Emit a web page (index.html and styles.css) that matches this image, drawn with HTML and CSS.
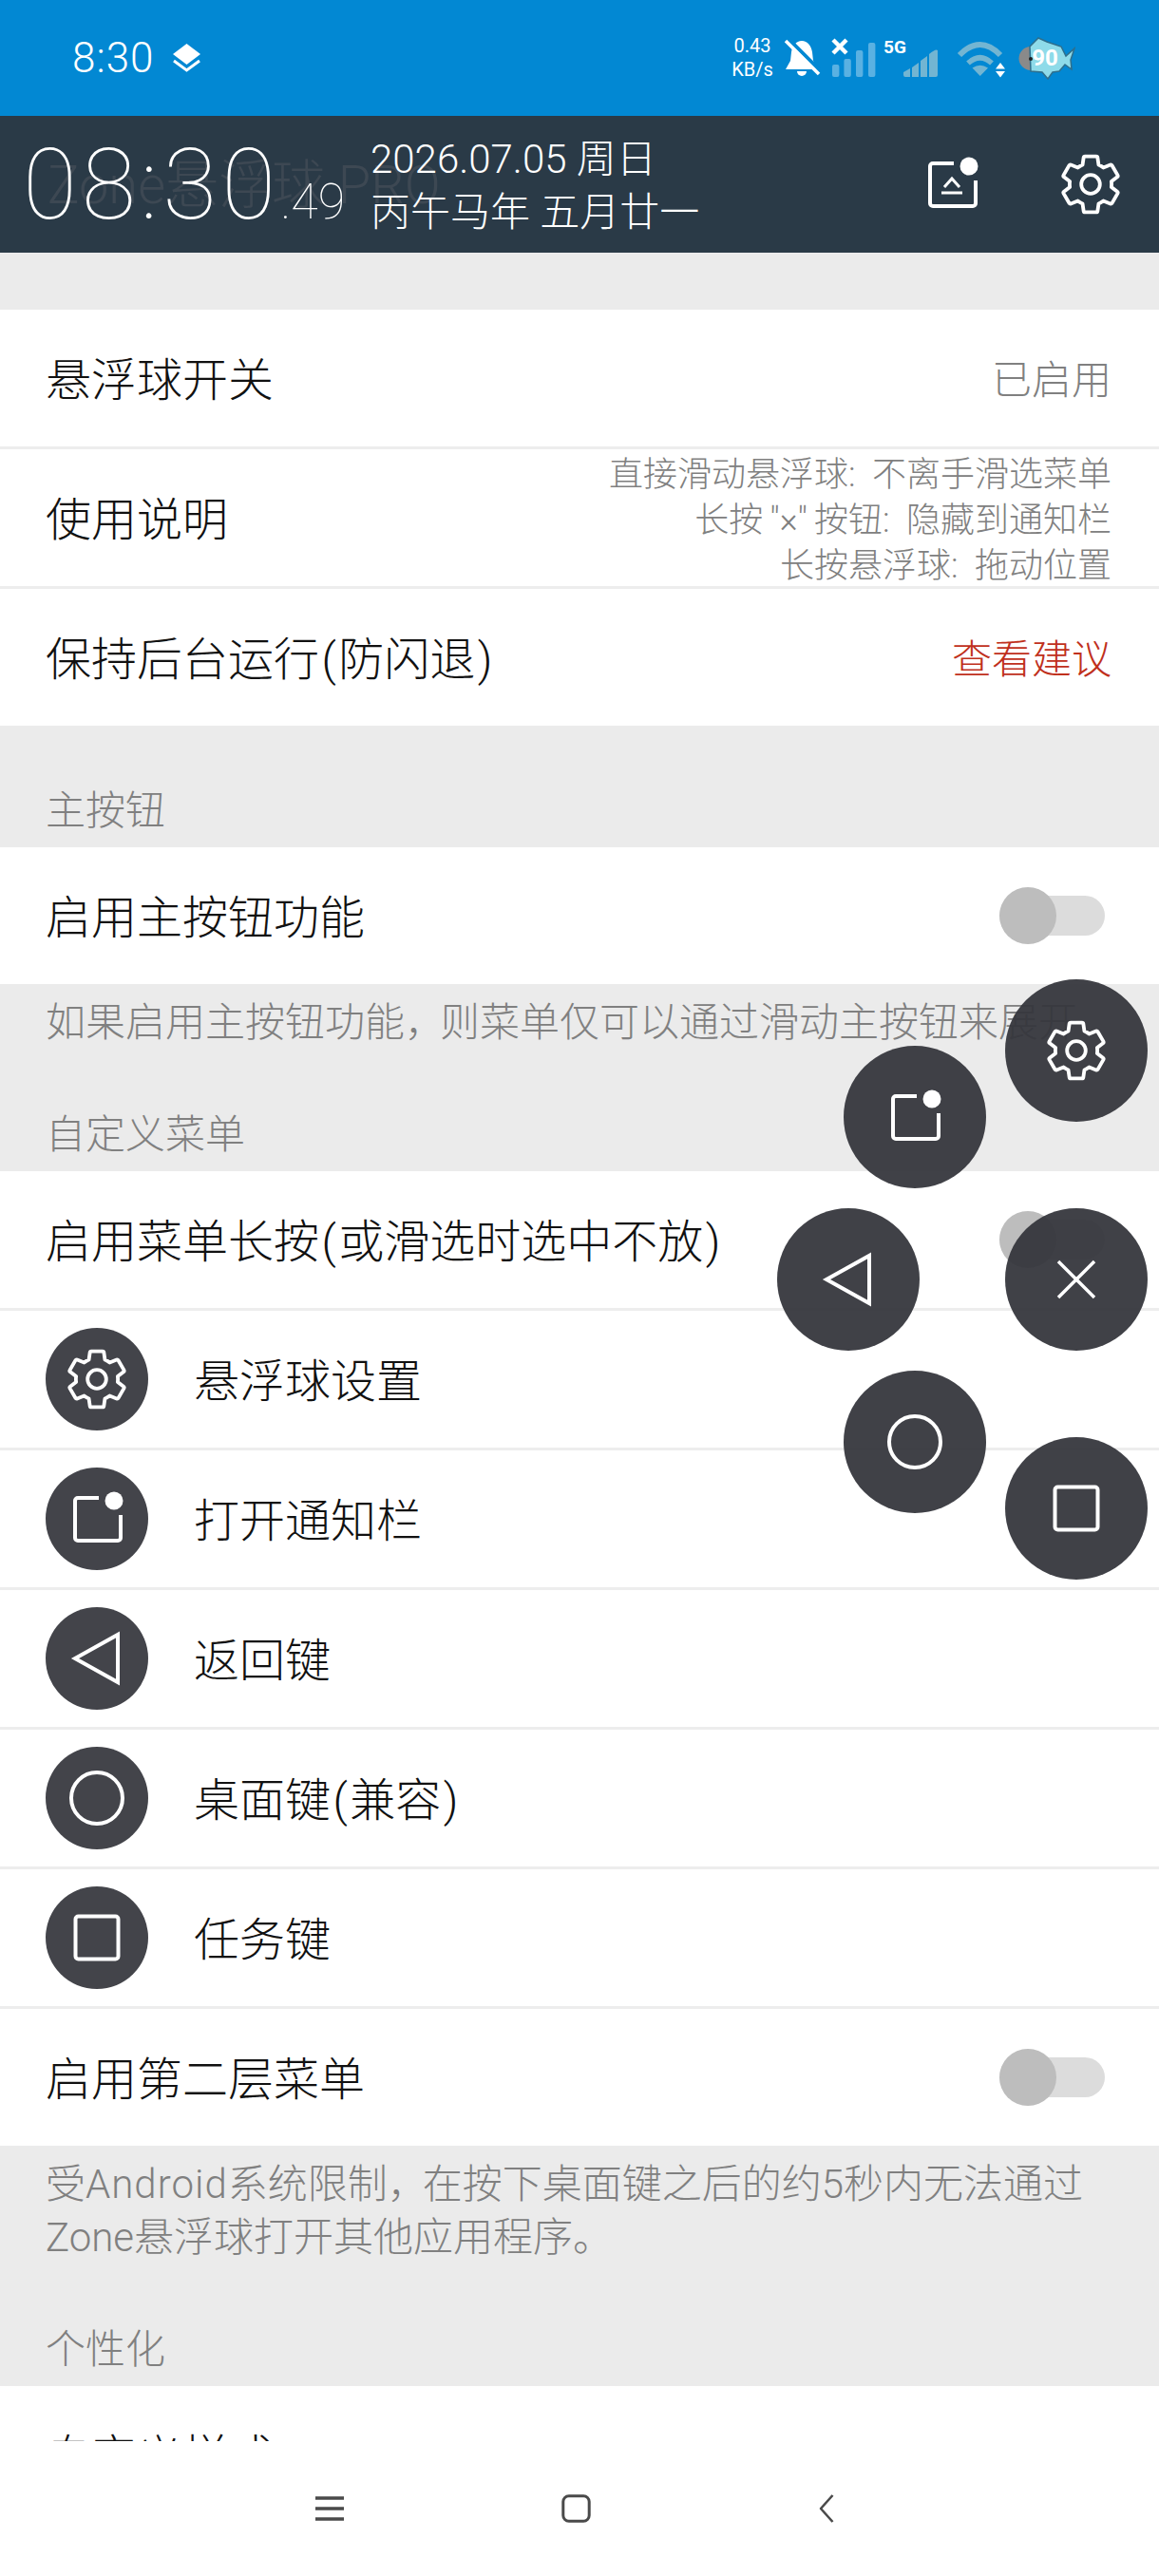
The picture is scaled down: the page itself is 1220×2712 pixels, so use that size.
FILE: index.html
```html
<!DOCTYPE html>
<html lang="zh-CN">
<head>
    <meta charset="UTF-8">
    <meta name="viewport" content="width=device-width, initial-scale=1.0">
    <title>Zone悬浮球 PRO</title>
    <link rel="stylesheet" href="styles.css">
</head>
<body>
    <svg class="defs" width="0" height="0">
        <symbol id="i-gear" viewBox="0 0 24 24">
            <path fill="none" stroke="#fff" stroke-width="1.300" stroke-linejoin="round" transform="translate(12 12) scale(.93) translate(-12 -12)" d="M19.43 12.98c.04-.32.07-.64.07-.98 0-.34-.03-.66-.07-.98l2.11-1.65c.19-.15.24-.42.12-.64l-2-3.46c-.09-.16-.26-.25-.44-.25-.06 0-.12.01-.17.03l-2.49 1c-.52-.4-1.08-.73-1.69-.98l-.38-2.65C14.46 2.18 14.25 2 14 2h-4c-.25 0-.46.18-.49.42l-.38 2.65c-.61.25-1.17.59-1.69.98l-2.49-1c-.06-.02-.12-.03-.18-.03-.17 0-.34.09-.43.25l-2 3.46c-.13.22-.07.49.12.64l2.11 1.65c-.04.32-.07.65-.07.98 0 .33.03.66.07.98l-2.11 1.65c-.19.15-.24.42-.12.64l2 3.46c.09.16.26.25.44.25.06 0 .12-.01.17-.03l2.49-1c.52.4 1.08.73 1.69.98l.38 2.65c.03.24.24.42.49.42h4c.25 0 .46-.18.49-.42l.38-2.65c.61-.25 1.17-.59 1.69-.98l2.49 1c.06.02.12.03.18.03.17 0 .34-.09.43-.25l2-3.46c.12-.22.07-.49-.12-.64l-2.11-1.65z"/>
            <circle cx="12" cy="12" r="3.100" fill="none" stroke="#fff" stroke-width="1.200"/>
        </symbol>
        <symbol id="i-notify" viewBox="0 0 76 76">
            <path fill="none" stroke="#fff" stroke-width="4" d="M40 16H18a3 3 0 0 0-3 3v39a3 3 0 0 0 3 3h42a3 3 0 0 0 3-3V34"/>
            <circle cx="56" cy="19" r="9.5" fill="#fff"/>
        </symbol>
        <symbol id="i-back" viewBox="0 0 76 76">
            <path fill="none" stroke="#fff" stroke-width="4" d="M15 38 60 13V63Z"/>
        </symbol>
        <symbol id="i-home" viewBox="0 0 76 76">
            <circle cx="38" cy="38" r="27" fill="none" stroke="#fff" stroke-width="4"/>
        </symbol>
        <symbol id="i-task" viewBox="0 0 76 76">
            <rect x="15.5" y="15.5" width="45" height="45" rx="3" fill="none" stroke="#fff" stroke-width="4"/>
        </symbol>
        <symbol id="i-close" viewBox="0 0 76 76">
            <path fill="none" stroke="#fff" stroke-width="3.5" d="M19 19 57 57M57 19 19 57"/>
        </symbol>
    </svg>

    <div class="app">
        <div class="statusbar">
            <span class="status-time">8:30</span>
            <svg class="status-layers" width="29" height="31" viewBox="0 0 29 31">
                <path fill="#fff" d="M14.5 0 29 11 14.5 22 0 11Z"/>
                <path fill="none" stroke="#fff" stroke-width="3" d="M1 18 14.5 28 28 18"/>
            </svg>
            <div class="status-right">
                <div class="status-speed"><span>0.43</span><span>KB/s</span></div>
                <svg class="icon-bell" width="39" height="43" viewBox="0 0 39 43">
                    <path fill="#fff" d="M19 3C25 3 29 8 30 15L31 24 36 33H2L7 24 8 15C9 8 13 3 19 3Z"/>
                    <path fill="#fff" d="M14 35H24A5 5 0 0 1 14 35Z"/>
                    <path stroke="#0288d3" stroke-width="4" d="M1 -3 39 35M-2 0 6 8"/>
                    <path stroke="#fff" stroke-width="3.6" d="M2 3 37 38"/>
                </svg>
                <svg class="icon-signal" width="47" height="42" viewBox="0 0 47 42">
                    <g fill="#fff" fill-opacity=".35">
                        <rect x="1" y="28" width="7.4" height="13" rx="2"/>
                        <rect x="13.4" y="22" width="7.4" height="19" rx="2"/>
                        <rect x="26" y="13" width="7.4" height="28" rx="2"/>
                        <rect x="39" y="5" width="7.4" height="36" rx="2"/>
                    </g>
                    <path fill="none" stroke="#fff" stroke-width="4.4" d="M2 2 16 16M16 2 2 16"/>
                </svg>
                <svg class="icon-signal2" width="58" height="42" viewBox="0 0 58 42">
                    <text class="icon-5g" x="0" y="16">5G</text>
                    <path fill="#73b5d2" d="M21 36 28 32V41H23Q21 41 21 39ZM30 31 37 26V41H30ZM39 24 46 19V41H39ZM48 17Q55 11 57 13V39Q57 41 55 41H48Z"/>
                </svg>
                <svg class="icon-wifi" width="52" height="42" viewBox="0 0 52 42">
                    <path fill="none" stroke="#73b5d2" stroke-width="6" d="M3 18Q24.7-4 46 18"/>
                    <path fill="none" stroke="#73b5d2" stroke-width="5.5" d="M12 26.500Q24.700 15 37 26.500"/>
                    <path fill="#73b5d2" d="M24.700 40 16.500 31.500Q24.700 26 33 31.500Z"/>
                    <path fill="#fff" d="M46 26 51 32.500H41ZM46 41.500 41 35H51Z"/>
                </svg>
                <svg class="icon-fish" width="60" height="46" viewBox="0 0 60 46">
                    <path fill="#8a8a8a" d="M13 11A12.500 12.500 0 0 0 13 36Z"/>
                    <path fill="#8edbe9" stroke="#2f6f8c" stroke-width="1.500" d="M12 11 21 2 30 6 45 11 50 21 59 13 55 25 56 35 49 30 43 37 36 38 31 45 25 38 13 37Z"/>
                    <circle cx="13" cy="24" r="2" fill="#222"/>
                    <text class="icon-90" x="28" y="31">90</text>
                </svg>
            </div>
        </div>

        <div class="header">
            <div class="watermark">Zone悬浮球 PRO</div>
            <div class="clock"><span class="clock-main">08:30</span><span class="clock-sec">.49</span></div>
            <div class="date">
                <div>2026.07.05 周日</div>
                <div>丙午马年 五月廿一</div>
            </div>
            <svg class="header-notify" width="76" height="76" viewBox="0 0 76 76">
                <use href="#i-notify"/>
                <path fill="none" stroke="#fff" stroke-width="3" d="M30 41 38 32 46 41M27 47H49"/>
            </svg>
            <svg class="header-gear" width="76" height="76"><use href="#i-gear"/></svg>
        </div>

        <div class="content">
            <div class="group top">
                <div class="row"><span class="row-title">悬浮球开关</span><span class="row-value">已启用</span></div>
                <div class="row"><span class="row-title">使用说明</span>
                    <span class="row-hint">直接滑动悬浮球:&nbsp; 不离手滑选菜单<br>长按<span class="quote">"×"</span>按钮:&nbsp; 隐藏到通知栏<br>长按悬浮球:&nbsp; 拖动位置</span>
                </div>
                <div class="row"><span class="row-title">保持后台运行<span class="paren">(</span>防闪退<span class="paren">)</span></span><span class="row-value red">查看建议</span></div>
            </div>

            <div class="section-label">主按钮</div>
            <div class="group">
                <div class="row"><span class="row-title">启用主按钮功能</span><span class="switch"></span></div>
            </div>
            <div class="desc">如果启用主按钮功能<span class="comma">，</span>则菜单仅可以通过滑动主按钮来展开</div>

            <div class="section-label">自定义菜单</div>
            <div class="group">
                <div class="row"><span class="row-title">启用菜单长按<span class="paren">(</span>或滑选时选中不放<span class="paren">)</span></span><span class="switch"></span></div>
                <div class="row"><span class="circle"><svg width="76" height="76"><use href="#i-gear"/></svg></span><span class="row-title">悬浮球设置</span></div>
                <div class="row"><span class="circle"><svg width="76" height="76"><use href="#i-notify"/></svg></span><span class="row-title">打开通知栏</span></div>
                <div class="row"><span class="circle"><svg width="76" height="76"><use href="#i-back"/></svg></span><span class="row-title">返回键</span></div>
                <div class="row"><span class="circle"><svg width="76" height="76"><use href="#i-home"/></svg></span><span class="row-title">桌面键<span class="paren">(</span>兼容<span class="paren">)</span></span></div>
                <div class="row"><span class="circle"><svg width="76" height="76"><use href="#i-task"/></svg></span><span class="row-title">任务键</span></div>
                <div class="row"><span class="row-title">启用第二层菜单</span><span class="switch"></span></div>
            </div>
            <div class="desc">受<span class="latin">Android</span>系统限制<span class="comma">，</span>在按下桌面键之后的约5秒内无法通过<br>Zone悬浮球打开其他应用程序。</div>

            <div class="section-label">个性化</div>
            <div class="group">
                <div class="row"><span class="row-title">自定义样式</span></div>
            </div>
        </div>

        <div class="navbar">
            <svg width="30" height="26" viewBox="0 0 30 26">
                <path stroke="#4a4a4a" stroke-width="3.400" d="M0 2H30M0 13H30M0 24H30"/>
            </svg>
            <svg width="31" height="30" viewBox="0 0 31 30">
                <rect x="1.800" y="1.800" width="27.400" height="26.400" rx="6" fill="none" stroke="#4a4a4a" stroke-width="3"/>
            </svg>
            <svg class="nav-back" width="16" height="30" viewBox="0 0 16 30">
                <path fill="none" stroke="#4a4a4a" stroke-width="2.600" stroke-linejoin="round" d="M14.500 1 2 15 14.500 29"/>
            </svg>
        </div>

        <div class="ball ball-gear"><svg width="76" height="76"><use href="#i-gear"/></svg></div>
        <div class="ball ball-notify"><svg width="76" height="76"><use href="#i-notify"/></svg></div>
        <div class="ball ball-back"><svg width="76" height="76"><use href="#i-back"/></svg></div>
        <div class="ball ball-close"><svg width="76" height="76"><use href="#i-close"/></svg></div>
        <div class="ball ball-home"><svg width="76" height="76"><use href="#i-home"/></svg></div>
        <div class="ball ball-task"><svg width="76" height="76"><use href="#i-task"/></svg></div>
    </div>
</body>
</html>
```

FILE: styles.css
```css
* {
    box-sizing: border-box;
}
body {
    margin: 0;
    font-family: Roboto, "Noto Sans CJK SC", sans-serif;
    font-weight: 300;
    background-color: #ebebeb;
}
.defs {
    position: absolute;
}
.app {
    position: relative;
    width: 1220px;
    height: 2712px;
    display: flex;
    flex-direction: column;
    overflow: hidden;
}

/* status bar */
.statusbar {
    height: 122px;
    flex: none;
    display: flex;
    align-items: center;
    padding: 0 88px 0 76px;
    background-color: #0288d3;
    color: #fff;
}
.status-time {
    font-size: 44px;
    font-weight: 300;
    letter-spacing: 1px;
}
.status-layers {
    margin-left: 20px;
}
.status-right {
    margin-left: auto;
    display: flex;
    align-items: center;
}
.status-speed {
    width: 44px;
    margin-right: 11px;
    display: flex;
    flex-direction: column;
    align-items: center;
    font-size: 20px;
    line-height: 25px;
    font-weight: 400;
}
.icon-bell {
    overflow: hidden;
}
.icon-signal {
    margin-left: 11px;
}
.icon-signal2 {
    margin-left: 8px;
}
.icon-wifi {
    margin-left: 19px;
}
.icon-fish {
    margin-left: 13px;
}
.icon-5g {
    font-size: 19px;
    font-weight: 700;
    fill: #fff;
}
.icon-90 {
    font-size: 24px;
    font-weight: 700;
    fill: #fff;
    text-anchor: middle;
}

/* header */
.header {
    position: relative;
    height: 144px;
    flex: none;
    display: flex;
    align-items: center;
    padding-left: 24px;
    background-color: #2a3a47;
    color: #fff;
}
.watermark {
    position: absolute;
    left: 50px;
    top: 36px;
    font-size: 56px;
    line-height: 74px;
    color: #3d4853;
}
.clock {
    position: relative;
    width: 366px;
    white-space: nowrap;
}
.clock-main {
    font-size: 104px;
    font-weight: 100;
    letter-spacing: 5px;
}
.clock-sec {
    font-size: 52px;
    font-weight: 100;
}
.date {
    position: relative;
    top: 2px;
    font-size: 42px;
    line-height: 56px;
    white-space: nowrap;
}
.header-notify {
    position: absolute;
    left: 964px;
    top: 34px;
}
.header-gear {
    position: absolute;
    left: 1110px;
    top: 34px;
}

/* list */
.content {
    flex: 1;
    min-height: 0;
    overflow: hidden;
    background-color: #ebebeb;
}
.group {
    background-color: #fff;
}
.group.top {
    margin-top: 60px;
}
.row {
    height: 144px;
    display: flex;
    align-items: center;
    padding: 0 50px 0 48px;
}
.row + .row {
    height: 147px;
    border-top: 3px solid #ededed;
}
.row-title {
    margin-top: -5px;
    font-size: 48px;
    color: #111;
    white-space: nowrap;
}
.paren {
    padding: 0 2.5px;
}
.row-value {
    margin-left: auto;
    margin-top: -3px;
    font-size: 42px;
    color: #808080;
}
.row-value.red {
    color: #c0301c;
}
.row-hint {
    margin-left: auto;
    margin-top: 5px;
    text-align: right;
    font-size: 36px;
    line-height: 48px;
    color: #808080;
    white-space: nowrap;
}
.quote {
    padding: 0 7px;
}
.switch {
    position: relative;
    width: 111px;
    height: 42px;
    margin-left: auto;
    margin-right: 7px;
    border-radius: 21px;
    background-color: #dcdcdc;
}
.switch::before {
    content: "";
    position: absolute;
    left: 0;
    top: -9px;
    width: 60px;
    height: 60px;
    border-radius: 50%;
    background-color: #bdbdbd;
}
.circle {
    width: 108px;
    height: 108px;
    margin-right: 48px;
    display: flex;
    align-items: center;
    justify-content: center;
    border-radius: 50%;
    background-color: #43444a;
}
.section-label {
    height: 128px;
    padding: 62px 48px 0;
    font-size: 42px;
    line-height: 56px;
    color: #808080;
}
.desc {
    padding: 13px 48px 0;
    font-size: 42px;
    line-height: 56px;
    color: #808080;
    white-space: nowrap;
}
.comma {
    margin-right: -5px;
}
.latin {
    letter-spacing: 1px;
}

/* bottom nav */
.navbar {
    height: 142px;
    flex: none;
    display: flex;
    align-items: center;
    gap: 229px;
    padding-left: 332px;
    background-color: #fff;
}
.nav-back {
    margin-left: 11px;
}

/* floating menu */
.ball {
    position: absolute;
    width: 150px;
    height: 150px;
    display: flex;
    align-items: center;
    justify-content: center;
    border-radius: 50%;
    background-color: rgba(52, 53, 59, 0.94);
}
.ball-gear {
    left: 1058px;
    top: 1031px;
}
.ball-notify {
    left: 888px;
    top: 1101px;
}
.ball-back {
    left: 818px;
    top: 1272px;
}
.ball-close {
    left: 1058px;
    top: 1272px;
}
.ball-home {
    left: 888px;
    top: 1443px;
}
.ball-task {
    left: 1058px;
    top: 1513px;
}
```
